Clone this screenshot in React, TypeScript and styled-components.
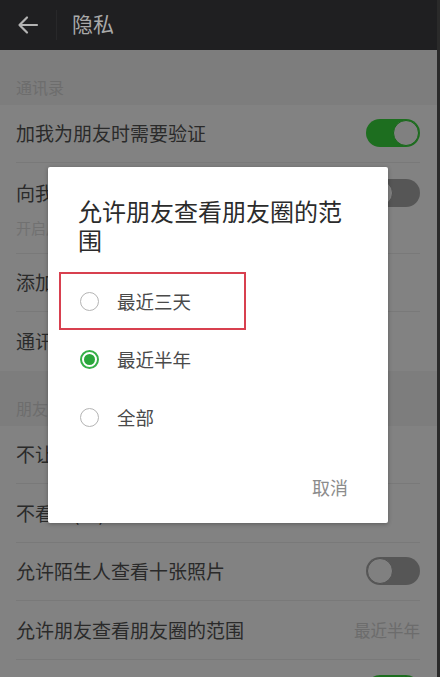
import React from "react";
import styled, { createGlobalStyle } from "styled-components";

const Global = createGlobalStyle`
  html, body { margin: 0; padding: 0; height: 677px; overflow: hidden; background: #2a2a2a; }
  * { box-sizing: border-box; }
  body { font-family: "Noto Sans CJK SC", "Noto Sans", sans-serif; }
`;

const Screen = styled.div`
  width: 437px;
  height: 677px;
  display: flex;
  flex-direction: column;
  overflow: hidden;
  background: #ffffff;
`;

const Header = styled.div`
  height: 50px;
  flex: none;
  background: #1f1f21;
  display: flex;
  align-items: center;
`;

const BackBtn = styled.div`
  width: 57px;
  height: 30px;
  display: flex;
  align-items: center;
  padding-left: 17px;
  border-right: 1px solid #28282a;
`;

const Title = styled.div`
  margin-left: 15px;
  font-size: 21px;
  color: #a9a9a9;
  line-height: 1;
  padding-bottom: 4px;
`;

const Content = styled.div`
  position: relative;
  flex: 1;
  overflow: hidden;
`;

const SectionHead = styled.div<{ $h: number }>`
  height: ${(p) => p.$h}px;
  background: #f5f5f5;
  color: #d6d6d6;
  font-size: 16px;
  padding: 0 16px 6px;
  display: flex;
  align-items: flex-end;
`;

const Group = styled.div`
  background: #ffffff;
  padding: 0 17px 0 16px;
`;

const Row = styled.div<{ $last?: boolean; $end?: boolean; $h?: number }>`
  height: ${(p) => p.$h ?? 58.5}px;
  flex: none;
  display: flex;
  align-items: center;
  justify-content: ${(p) => (p.$end ? "flex-end" : "space-between")};
  border-bottom: ${(p) => (p.$last ? "none" : "1px solid #eeeeee")};
`;

const RowTall = styled.div`
  border-bottom: 1px solid #eeeeee;
  padding: 16px 0 15px;
`;

const RowLine = styled.div`
  display: flex;
  align-items: center;
  justify-content: space-between;
`;

const Label = styled.div`
  font-size: 19px;
  color: #545454;
  line-height: 28px;
  white-space: nowrap;
`;

const Sub = styled.div`
  font-size: 15px;
  color: #dedede;
  margin-top: 11px;
  line-height: 20px;
  white-space: nowrap;
`;

const Value = styled.div`
  font-size: 16.5px;
  color: #d4d4d4;
`;

const Toggle = styled.div<{ $on: boolean }>`
  width: 54px;
  height: 28px;
  border-radius: 14px;
  flex: none;
  background: ${(p) => (p.$on ? "#3ad83e" : "#aaaaaa")};
  display: flex;
  justify-content: ${(p) => (p.$on ? "flex-end" : "flex-start")};
  padding: 1px;
`;

const Knob = styled.div<{ $on: boolean }>`
  width: 26px;
  height: 26px;
  border-radius: 50%;
  background: #fcfcfc;
  border: 1.5px solid ${(p) => (p.$on ? "#2ecb32" : "#a0a0a0")};
`;

const Overlay = styled.div`
  position: absolute;
  inset: 0;
  background: rgba(0, 0, 0, 0.49);
  display: flex;
  justify-content: flex-start;
  align-items: flex-start;
  padding: 117px 0 0 48px;
`;

const Dialog = styled.div`
  width: 340px;
  height: 356px;
  background: #ffffff;
  border-radius: 2px;
  box-shadow: 0 1px 4px rgba(0, 0, 0, 0.3);
  display: flex;
  flex-direction: column;
`;

const DialogTitle = styled.div`
  font-size: 24px;
  line-height: 29px;
  color: #2b2b2b;
  padding: 29px 24px 0 30px;
`;

const Options = styled.div`
  margin-top: 18px;
  display: flex;
  flex-direction: column;
`;

const Option = styled.div`
  position: relative;
  height: 58px;
  display: flex;
  align-items: center;
  padding-left: 32px;
`;

const Radio = styled.div<{ $checked: boolean }>`
  width: 19px;
  height: 19px;
  border-radius: 50%;
  border: ${(p) => (p.$checked ? "2px solid #35b047" : "1.5px solid #b4b4b4")};
  display: flex;
  align-items: center;
  justify-content: center;
  flex: none;
  &::after {
    content: "";
    display: ${(p) => (p.$checked ? "block" : "none")};
    width: 11px;
    height: 11px;
    border-radius: 50%;
    background: #2aa63b;
  }
`;

const OptionText = styled.div`
  margin-left: 18px;
  font-size: 18.5px;
  color: #4a4a4a;
`;

const Highlight = styled.div`
  position: absolute;
  left: 11px;
  top: 0;
  width: 187px;
  height: 58px;
  border: 2px solid #d8404f;
  pointer-events: none;
`;

const Actions = styled.div`
  margin-top: auto;
  display: flex;
  justify-content: flex-end;
  padding: 0 40px 23px 0;
`;

const Cancel = styled.div`
  font-size: 18px;
  color: #8c8c8c;
`;

const Arrow = () => (
  <svg width="22" height="20" viewBox="0 0 22 20" fill="none">
    <path d="M20 10H3M10 2.5L2.5 10L10 17.5" stroke="#b3b3b3" strokeWidth="2.2" strokeLinecap="round" strokeLinejoin="round" />
  </svg>
);

const Switch = ({ on }: { on: boolean }) => (
  <Toggle $on={on}>
    <Knob $on={on} />
  </Toggle>
);

export default function App() {
  const options = [
    { text: "最近三天", checked: false, mark: true },
    { text: "最近半年", checked: true, mark: false },
    { text: "全部", checked: false, mark: false },
  ];
  return (
    <>
      <Global />
      <Screen>
        <Header>
          <BackBtn>
            <Arrow />
          </BackBtn>
          <Title>隐私</Title>
        </Header>
        <Content>
          <SectionHead $h={55}>通讯录</SectionHead>
          <Group>
            <Row $h={57.5}>
              <Label>加我为朋友时需要验证</Label>
              <Switch on />
            </Row>
            <RowTall>
              <RowLine>
                <Label>向我推荐通讯录朋友</Label>
                <Switch on={false} />
              </RowLine>
              <Sub>开启后，为你推荐已经开通微信的手机联系人</Sub>
            </RowTall>
            <Row>
              <Label>添加我的方式</Label>
            </Row>
            <Row $last>
              <Label>通讯录黑名单</Label>
            </Row>
          </Group>
          <SectionHead $h={55}>朋友圈</SectionHead>
          <Group>
            <Row>
              <Label>不让他(她)看我的朋友圈</Label>
            </Row>
            <Row>
              <Label>不看他(她)的朋友圈</Label>
            </Row>
            <Row>
              <Label>允许陌生人查看十张照片</Label>
              <Switch on={false} />
            </Row>
            <Row>
              <Label>允许朋友查看朋友圈的范围</Label>
              <Value>最近半年</Value>
            </Row>
            <Row $last $end>
              <Switch on />
            </Row>
          </Group>
          <Overlay>
            <Dialog>
              <DialogTitle>允许朋友查看朋友圈的范围</DialogTitle>
              <Options>
                {options.map((o) => (
                  <Option key={o.text}>
                    <Radio $checked={o.checked} />
                    <OptionText>{o.text}</OptionText>
                    {o.mark && <Highlight />}
                  </Option>
                ))}
              </Options>
              <Actions>
                <Cancel>取消</Cancel>
              </Actions>
            </Dialog>
          </Overlay>
        </Content>
      </Screen>
    </>
  );
}
